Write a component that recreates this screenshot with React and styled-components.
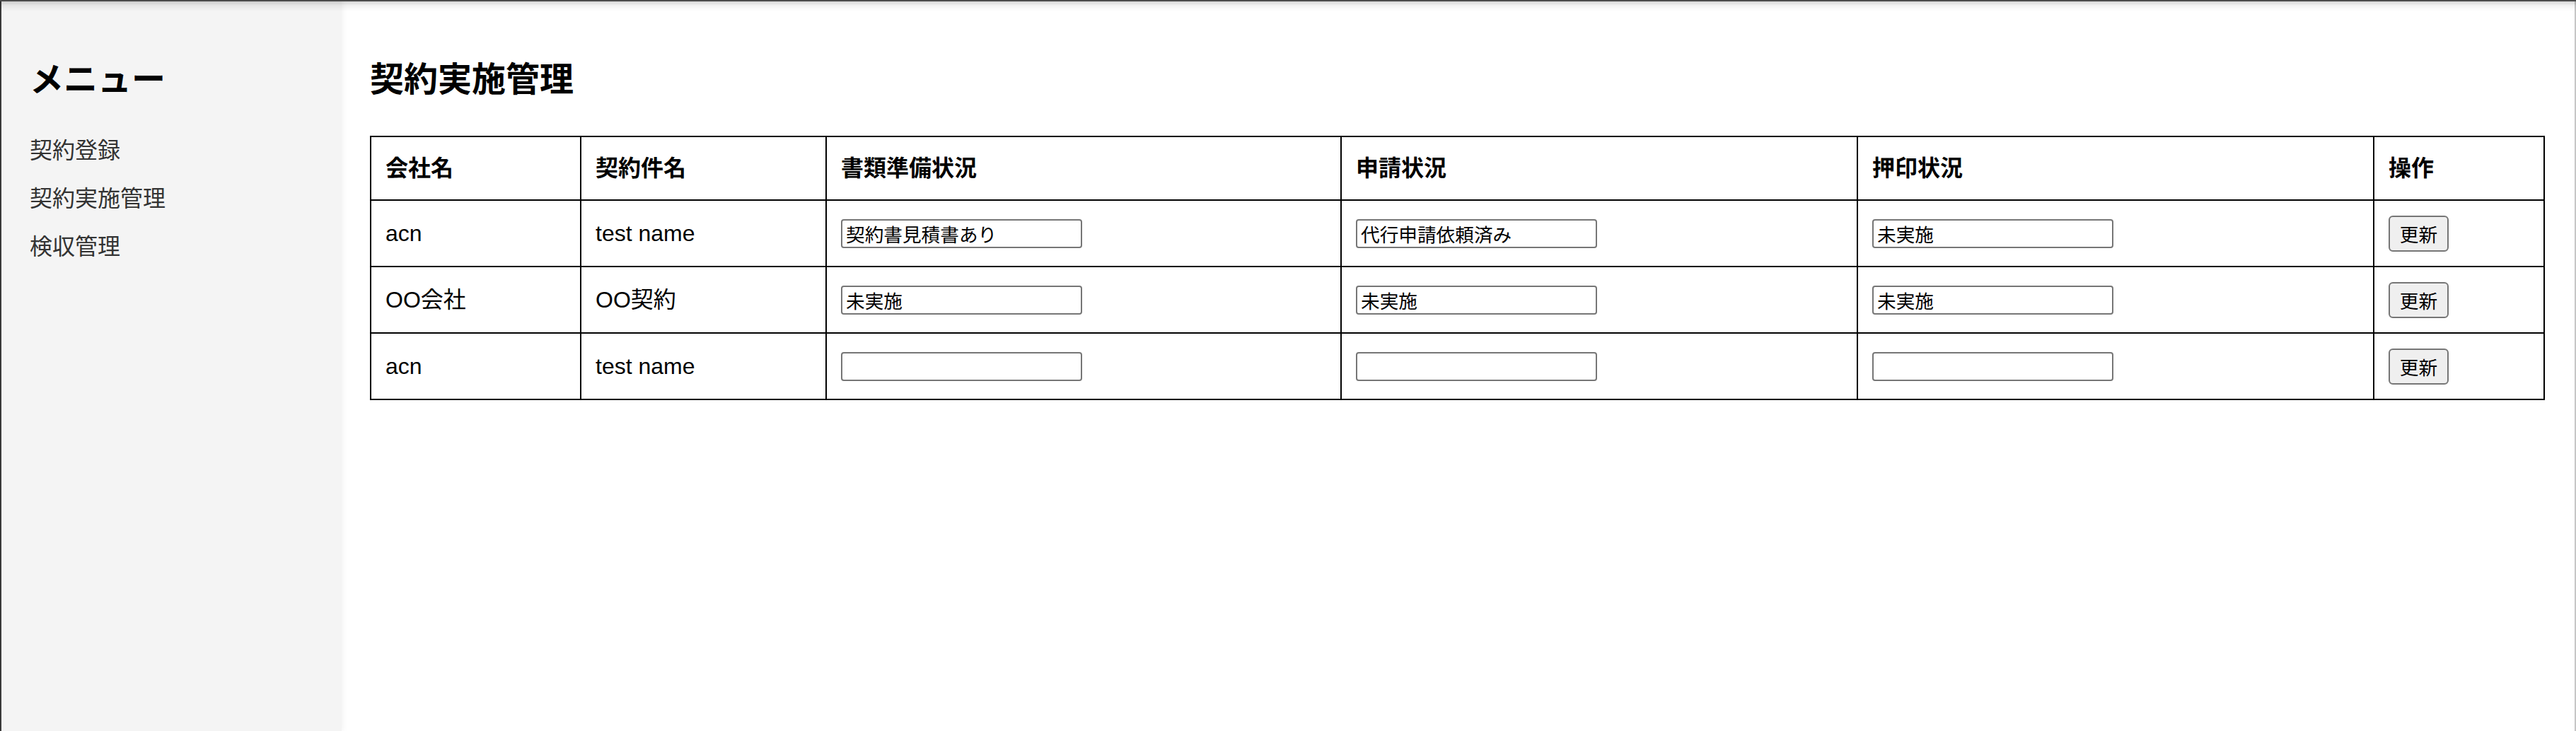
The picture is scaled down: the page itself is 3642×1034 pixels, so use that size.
import React from "react";
import styled, { createGlobalStyle } from "styled-components";

const GlobalStyle = createGlobalStyle`
  html, body {
    margin: 0;
    padding: 0;
    background: #ffffff;
  }
  body {
    font-family: "Liberation Sans", "Noto Sans CJK JP", sans-serif;
    color: #000;
  }
  *, *::before, *::after { box-sizing: border-box; }
`;

const Frame = styled.div`
  display: flex;
  min-height: 100vh;
  border-left: 2px solid #3a3a3a;
  border-right: 2px solid #c6c6c6;
  position: relative;

  &::before {
    content: "";
    position: fixed;
    left: 0;
    right: 0;
    top: 0;
    height: 16px;
    pointer-events: none;
    z-index: 10;
    background: linear-gradient(
      to bottom,
      #4b4b4b 0,
      #4b4b4b 2px,
      rgba(0, 0, 0, 0.16) 2px,
      rgba(0, 0, 0, 0.05) 8px,
      rgba(0, 0, 0, 0) 16px
    );
  }
`;

const Sidebar = styled.aside`
  flex: none;
  width: 481px;
  background: #f4f4f4;
  padding: 80px 40px 40px 40px;
  box-shadow: 2px 0 8px rgba(0, 0, 0, 0.05);
  position: relative;
  z-index: 1;
`;

const Heading = styled.h2`
  margin: 0 0 ${(p) => p.$gap}px 0;
  font-family: "Noto Sans CJK JP", sans-serif;
  font-size: 48px;
  font-weight: 700;
  line-height: 56px;
  color: #000;
`;

const MenuList = styled.ul`
  list-style: none;
  margin: 0;
  padding: 0;
`;

const MenuItem = styled.li`
  font-family: "Noto Sans CJK JP", sans-serif;
  font-size: 32px;
  line-height: 36px;
  padding: 16px 0;
  color: #333;
  cursor: pointer;
`;

const Main = styled.main`
  flex: 1;
  min-width: 0;
  padding: 80px 42px 40px 40px;
  background: #fff;
`;

const Table = styled.table`
  width: 100%;
  border-collapse: collapse;
  table-layout: fixed;
  border: 2px solid #000;
`;

const Col = styled.col`
  width: ${(p) => (p.$w ? `${p.$w}px` : "auto")};
`;

const HeadCell = styled.th`
  border: 2px solid #000;
  padding: 20px;
  text-align: left;
  font-family: "Liberation Sans", "Noto Sans CJK JP", sans-serif;
  font-weight: 700;
  font-size: 32px;
  line-height: 48px;
  vertical-align: middle;
`;

const Cell = styled.td`
  border: 2px solid #000;
  padding: 20px;
  font-size: 32px;
  line-height: 52px;
  height: 94px;
  vertical-align: middle;
  white-space: nowrap;
`;

const StatusInput = styled.input`
  display: block;
  width: 341px;
  height: 41px;
  margin: 0;
  padding: 2px 5px;
  border: 2px solid #767676;
  border-radius: 4px;
  background: #fff;
  font-family: "Noto Sans CJK JP", sans-serif;
  font-size: 26.67px;
  line-height: 33px;
  color: #000;
  outline: none;
`;

const UpdateButton = styled.button`
  display: block;
  width: 85px;
  height: 51px;
  margin: 0;
  padding: 0 12px;
  border: 2px solid #767676;
  border-radius: 6px;
  background: #efefef;
  font-family: "Noto Sans CJK JP", sans-serif;
  font-size: 26.67px;
  line-height: 47px;
  color: #000;
  cursor: pointer;
`;

const menu = ["契約登録", "契約実施管理", "検収管理"];

const columns = [
  { label: "会社名", w: 297 },
  { label: "契約件名", w: 347 },
  { label: "書類準備状況", w: 728 },
  { label: "申請状況", w: 730 },
  { label: "押印状況", w: 730 },
  { label: "操作" },
];

const rows = [
  { company: "acn", name: "test name", docs: "契約書見積書あり", apply: "代行申請依頼済み", stamp: "未実施" },
  { company: "OO会社", name: "OO契約", docs: "未実施", apply: "未実施", stamp: "未実施" },
  { company: "acn", name: "test name", docs: "", apply: "", stamp: "" },
];

export default function App() {
  return (
    <>
      <GlobalStyle />
      <Frame>
        <Sidebar>
          <Heading $gap={40}>メニュー</Heading>
          <MenuList>
            {menu.map((m) => (
              <MenuItem key={m}>{m}</MenuItem>
            ))}
          </MenuList>
        </Sidebar>
        <Main>
          <Heading $gap={56}>契約実施管理</Heading>
          <Table>
            <colgroup>
              {columns.map((c) => (
                <Col key={c.label} $w={c.w} />
              ))}
            </colgroup>
            <thead>
              <tr>
                {columns.map((c) => (
                  <HeadCell key={c.label}>{c.label}</HeadCell>
                ))}
              </tr>
            </thead>
            <tbody>
              {rows.map((r, i) => (
                <tr key={i}>
                  <Cell>{r.company}</Cell>
                  <Cell>{r.name}</Cell>
                  <Cell>
                    <StatusInput type="text" defaultValue={r.docs} />
                  </Cell>
                  <Cell>
                    <StatusInput type="text" defaultValue={r.apply} />
                  </Cell>
                  <Cell>
                    <StatusInput type="text" defaultValue={r.stamp} />
                  </Cell>
                  <Cell>
                    <UpdateButton type="button">更新</UpdateButton>
                  </Cell>
                </tr>
              ))}
            </tbody>
          </Table>
        </Main>
      </Frame>
    </>
  );
}
